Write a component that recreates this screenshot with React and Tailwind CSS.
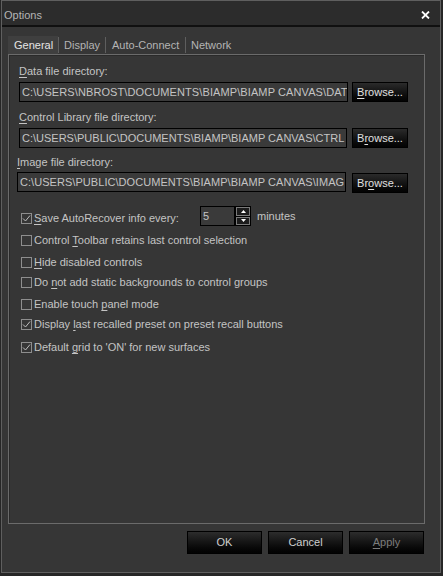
import React from "react";

const U = ({ children }) => (
  <span className="underline underline-offset-[2px] decoration-1">{children}</span>
);

function Box({ checked }) {
  return (
    <div className="w-[11px] h-[11px] border border-[#8e8e8e] flex items-center justify-center shrink-0">
      {checked && (
        <svg width="9" height="9" viewBox="0 0 9 9">
          <path d="M1 4.5 L3.5 7 L8 1.5" fill="none" stroke="#bdbdbd" strokeWidth="1" />
        </svg>
      )}
    </div>
  );
}

function Check({ checked, children, className = "" }) {
  return (
    <div className={"flex items-center h-[13px] ml-[2px] " + className}>
      <Box checked={checked} />
      <span className="ml-[2px] text-[#c4c4c4] leading-[13px] whitespace-nowrap">{children}</span>
    </div>
  );
}

function Field({ text, w }) {
  return (
    <div
      className={
        "h-[20px] border border-black bg-[#3a3a3a] overflow-hidden whitespace-nowrap pl-[2px] leading-[18px] text-[#c4c4c4] shrink-0 " +
        w
      }
    >
      {text}
    </div>
  );
}

function Browse({ children, className = "" }) {
  return (
    <div
      className={
        "w-[56px] h-[20px] border border-black bg-linear-to-b from-[#2b2b2b] to-[#030303] text-[#e0e0e0] flex items-center justify-center shrink-0 " +
        className
      }
    >
      {children}
    </div>
  );
}

function Btn({ children, dim }) {
  return (
    <div
      className={
        "w-[75px] h-[23px] border border-black bg-linear-to-b from-[#2d2d2d] to-[#020202] flex items-center justify-center " +
        (dim ? "text-[#7c7c7c]" : "text-[#cfcfcf]")
      }
    >
      {children}
    </div>
  );
}

export default function App() {
  return (
    <div className="w-[443px] h-[576px] bg-[#262626] font-['Liberation_Sans',Arial,sans-serif] text-[11px] overflow-hidden">
      <div className="ml-[1px] w-[440px] h-[573px] border border-[#5f5f5f] bg-[#363636] flex flex-col">
        {/* title bar */}
        <div className="h-[24px] bg-[#2c2c2c] border-b-2 border-[#101010] box-content flex items-center justify-between pl-[2px] pr-[10px] pt-0">
          <span className="text-[#b5b5b5] translate-y-[2px]">Options</span>
          <svg width="9" height="8" viewBox="0 0 9 8" className="translate-y-[2px]">
            <path d="M1 0.5 L8 7.5 M8 0.5 L1 7.5" stroke="#ffffff" strokeWidth="1.8" />
          </svg>
        </div>

        {/* tabs */}
        <div className="pt-[9px] pl-[6px] flex h-[27px] box-border">
          <div className="w-[50px] h-[18px] bg-[#3f3f3f] pl-[6px] flex items-center text-[#e4e4e4]">General</div>
          <div className="w-px h-[16px] bg-[#5e5e5e] self-center" />
          <div className="w-[46px] h-[18px] pl-[5px] flex items-center text-[#b4b4b4]">Display</div>
          <div className="w-px h-[16px] bg-[#5e5e5e] self-center" />
          <div className="w-[79px] h-[18px] pl-[6px] flex items-center text-[#b4b4b4]">Auto-Connect</div>
          <div className="w-px h-[16px] bg-[#5e5e5e] self-center" />
          <div className="h-[18px] pl-[5px] flex items-center text-[#b4b4b4]">Network</div>
        </div>

        {/* panel */}
        <div className="ml-[6px] w-[417px] h-[470px] border border-[#6b6b6b] shadow-[inset_1px_1px_0_#2a2a2a] bg-[#363636] pl-[10px] flex flex-col">
          <div className="mt-[10px] h-[13px] leading-[13px] text-[#c4c4c4]">
            <U>D</U>ata file directory:
          </div>
          <div className="mt-[4px] flex">
            <Field w="w-[329px] tracking-[0.1px]" text={"C:\\USERS\\NBROST\\DOCUMENTS\\BIAMP\\BIAMP CANVAS\\DAT"} />
            <Browse className="ml-[4px]">
              <U>B</U>rowse...
            </Browse>
          </div>

          <div className="mt-[9px] h-[13px] leading-[13px] text-[#c4c4c4]">
            <U>C</U>ontrol Library file directory:
          </div>
          <div className="mt-[4px] flex">
            <Field w="w-[328px]" text={"C:\\USERS\\PUBLIC\\DOCUMENTS\\BIAMP\\BIAMP CANVAS\\CTRL"} />
            <Browse className="ml-[5px]">
              B<U>r</U>owse...
            </Browse>
          </div>

          <div className="mt-[8px] ml-[-2px] h-[13px] leading-[13px] text-[#c4c4c4]">
            <U>I</U>mage file directory:
          </div>
          <div className="mt-[3px] ml-[-2px] flex items-start h-[21px]">
            <Field w="w-[329px] tracking-[0.05px]" text={"C:\\USERS\\PUBLIC\\DOCUMENTS\\BIAMP\\BIAMP CANVAS\\IMAG"} />
            <Browse className="ml-[6px] mt-[1px]">
              Br<U>o</U>wse...
            </Browse>
          </div>

          {/* autorecover row */}
          <div className="mt-[13px] flex items-start h-[20px]">
            <div className="w-[181px]">
              <Check checked className="mt-[6px]">
                <U>S</U>ave AutoRecover info every:
              </Check>
            </div>
            <div className="flex items-center h-[20px]">
              <div className="w-[35px] h-[20px] border border-black bg-[#3a3a3a] pl-[2px] leading-[18px] text-[#c4c4c4]">
                5
              </div>
              <div className="w-[16px] h-[20px] bg-black p-px flex flex-col gap-px">
                <div className="flex-1 border border-[#7a7a7a] bg-[#1c1c1c] flex items-center justify-center">
                  <svg width="5" height="3" viewBox="0 0 5 3">
                    <path d="M0 3 L2.5 0 L5 3 Z" fill="#ffffff" />
                  </svg>
                </div>
                <div className="flex-1 border border-[#7a7a7a] bg-[#1c1c1c] flex items-center justify-center">
                  <svg width="5" height="3" viewBox="0 0 5 3">
                    <path d="M0 0 L2.5 3 L5 0 Z" fill="#ffffff" />
                  </svg>
                </div>
              </div>
              <span className="ml-[6px] text-[#c4c4c4]">minutes</span>
            </div>
          </div>

          <Check className="mt-[8px]">
            Control <U>T</U>oolbar retains last control selection
          </Check>
          <Check className="mt-[9px]">
            <U>H</U>ide disabled controls
          </Check>
          <Check className="mt-[7px]">
            Do <U>n</U>ot add static backgrounds to control groups
          </Check>
          <Check className="mt-[9px]">
            Enable touch <U>p</U>anel mode
          </Check>
          <Check checked className="mt-[7px]">
            Display <U>l</U>ast recalled preset on preset recall buttons
          </Check>
          <Check checked className="mt-[10px]">
            Default <U>g</U>rid to 'ON' for new surfaces
          </Check>
        </div>

        {/* buttons */}
        <div className="mt-[7px] flex justify-end pr-[16px] gap-[6px]">
          <Btn>OK</Btn>
          <Btn>Cancel</Btn>
          <Btn dim>
            <U>A</U>pply
          </Btn>
        </div>
      </div>
    </div>
  );
}
